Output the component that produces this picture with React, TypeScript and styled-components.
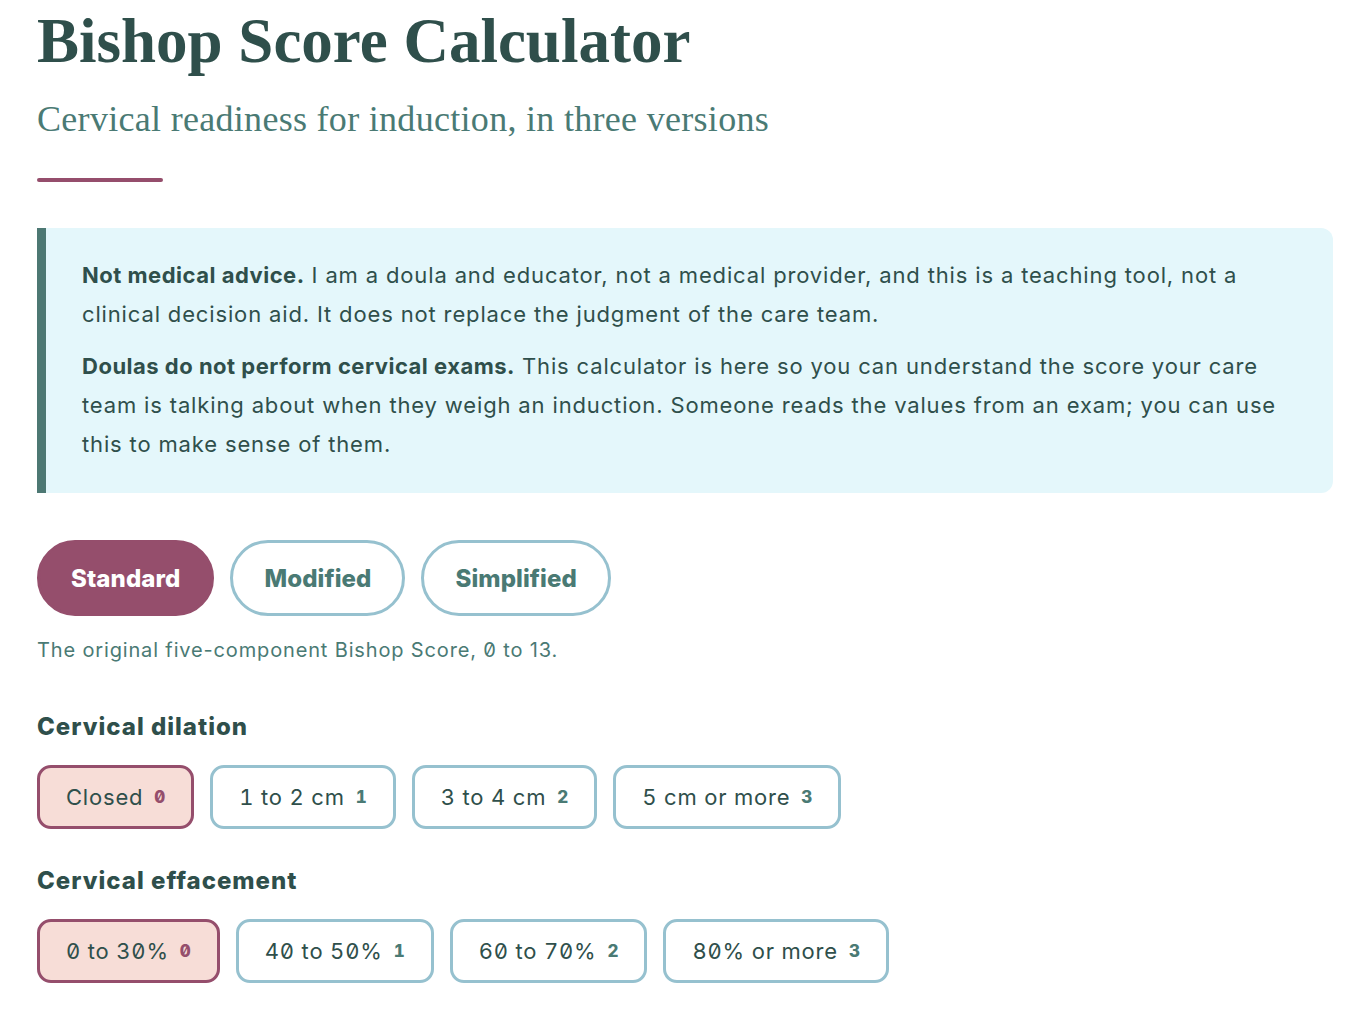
import React, { useState } from "react";
import styled, { createGlobalStyle } from "styled-components";

const GlobalStyle = createGlobalStyle`
  body {
    margin: 0;
    background: #ffffff;
    font-family: Inter, "Noto Sans", sans-serif;
    font-feature-settings: "zero" 1;
    color: #2f4f4b;
  }
`;

const Page = styled.main`
  width: 1296px;
  padding: 0 0 40px 37px;
`;

const Title = styled.h1`
  margin: 0;
  padding-top: 3px;
  font-family: "Liberation Serif", "DejaVu Serif", serif;
  font-weight: 700;
  font-size: 63px;
  line-height: 76px;
  color: #2f4f4b;
`;

const Subtitle = styled.p`
  margin: 20px 0 0;
  font-family: "Liberation Serif", "DejaVu Serif", serif;
  font-size: 36px;
  line-height: 40px;
  letter-spacing: 0.3px;
  color: #4a7a74;
`;

const Rule = styled.div`
  width: 126px;
  height: 4px;
  margin-top: 39px;
  border-radius: 2px;
  background: #954e6c;
`;

const Callout = styled.section`
  margin-top: 46px;
  padding: 28px 45px 29px 36px;
  background: #e4f7fb;
  border-left: 9px solid #4d7873;
  border-radius: 0 12px 12px 0;
`;

const Para = styled.p`
  margin: 0;
  font-size: 22px;
  line-height: 39px;
  letter-spacing: 0.85px;
  color: #2f4f4b;

  & + & {
    margin-top: 13px;
  }

  strong {
    font-weight: 700;
    letter-spacing: 0.5px;
  }
`;

const Tabs = styled.div`
  display: flex;
  gap: 16px;
  margin-top: 47px;
`;

const Tab = styled.button<{ $active: boolean }>`
  height: 76px;
  padding: 0 31px;
  border-radius: 38px;
  border: 3px solid ${({ $active }) => ($active ? "#954e6c" : "#96c1cf")};
  background: ${({ $active }) => ($active ? "#954e6c" : "#ffffff")};
  color: ${({ $active }) => ($active ? "#ffffff" : "#4a7a74")};
  font-family: Inter, "Noto Sans", sans-serif;
  font-weight: 800;
  font-size: 24px;
  letter-spacing: 0.1px;
  cursor: pointer;
`;

const Description = styled.p`
  margin: 20px 0 0;
  font-size: 20px;
  line-height: 28px;
  letter-spacing: 0.85px;
  color: #4a7a74;
`;

const Group = styled.div`
  margin-top: 48px;

  & + & {
    margin-top: 37px;
  }
`;

const GroupLabel = styled.h3`
  margin: 0;
  font-size: 24px;
  line-height: 30px;
  font-weight: 800;
  letter-spacing: 1px;
  color: #2f4f4b;
`;

const Options = styled.div`
  display: flex;
  gap: 16px;
  margin-top: 23px;
`;

const Option = styled.button<{ $selected: boolean }>`
  display: flex;
  align-items: center;
  gap: 11px;
  height: 64px;
  padding: 0 26px;
  border-radius: 14px;
  border: 3px solid ${({ $selected }) => ($selected ? "#954e6c" : "#96c1cf")};
  background: ${({ $selected }) => ($selected ? "#f7ddd7" : "#ffffff")};
  color: #2f4f4b;
  font-family: Inter, "Noto Sans", sans-serif;
  font-feature-settings: "zero" 1, "tnum" 1;
  font-size: 22px;
  letter-spacing: 0.8px;
  cursor: pointer;
`;

const Points = styled.span<{ $selected: boolean }>`
  font-size: 17px;
  font-weight: 800;
  letter-spacing: 0;
  color: ${({ $selected }) => ($selected ? "#954e6c" : "#4a7a74")};
`;

const versions = [
  { key: "standard", label: "Standard", note: "The original five-component Bishop Score, 0 to 13." },
  { key: "modified", label: "Modified", note: "The modified Bishop Score." },
  { key: "simplified", label: "Simplified", note: "The simplified Bishop Score." },
];

const groups = [
  {
    id: "dilation",
    label: "Cervical dilation",
    options: ["Closed", "1 to 2 cm", "3 to 4 cm", "5 cm or more"],
  },
  {
    id: "effacement",
    label: "Cervical effacement",
    options: ["0 to 30%", "40 to 50%", "60 to 70%", "80% or more"],
  },
];

export default function App() {
  const [version, setVersion] = useState("standard");
  const [picks, setPicks] = useState<Record<string, number>>({ dilation: 0, effacement: 0 });
  const current = versions.find(v => v.key === version)!;

  return (
    <Page>
      <GlobalStyle />
      <Title>Bishop Score Calculator</Title>
      <Subtitle>Cervical readiness for induction, in three versions</Subtitle>
      <Rule />

      <Callout>
        <Para>
          <strong>Not medical advice.</strong> I am a doula and educator, not a medical provider, and this is a
          teaching tool, not a clinical decision aid. It does not replace the judgment of the care team.
        </Para>
        <Para>
          <strong>Doulas do not perform cervical exams.</strong> This calculator is here so you can understand the
          score your care team is talking about when they weigh an induction. Someone reads the values from an
          exam; you can use this to make sense of them.
        </Para>
      </Callout>

      <Tabs>
        {versions.map(v => (
          <Tab key={v.key} $active={v.key === version} onClick={() => setVersion(v.key)}>
            {v.label}
          </Tab>
        ))}
      </Tabs>
      <Description>{current.note}</Description>

      {groups.map(g => (
        <Group key={g.id}>
          <GroupLabel>{g.label}</GroupLabel>
          <Options>
            {g.options.map((o, i) => {
              const selected = picks[g.id] === i;
              return (
                <Option key={o} $selected={selected} onClick={() => setPicks({ ...picks, [g.id]: i })}>
                  {o}
                  <Points $selected={selected}>{i}</Points>
                </Option>
              );
            })}
          </Options>
        </Group>
      ))}
    </Page>
  );
}
